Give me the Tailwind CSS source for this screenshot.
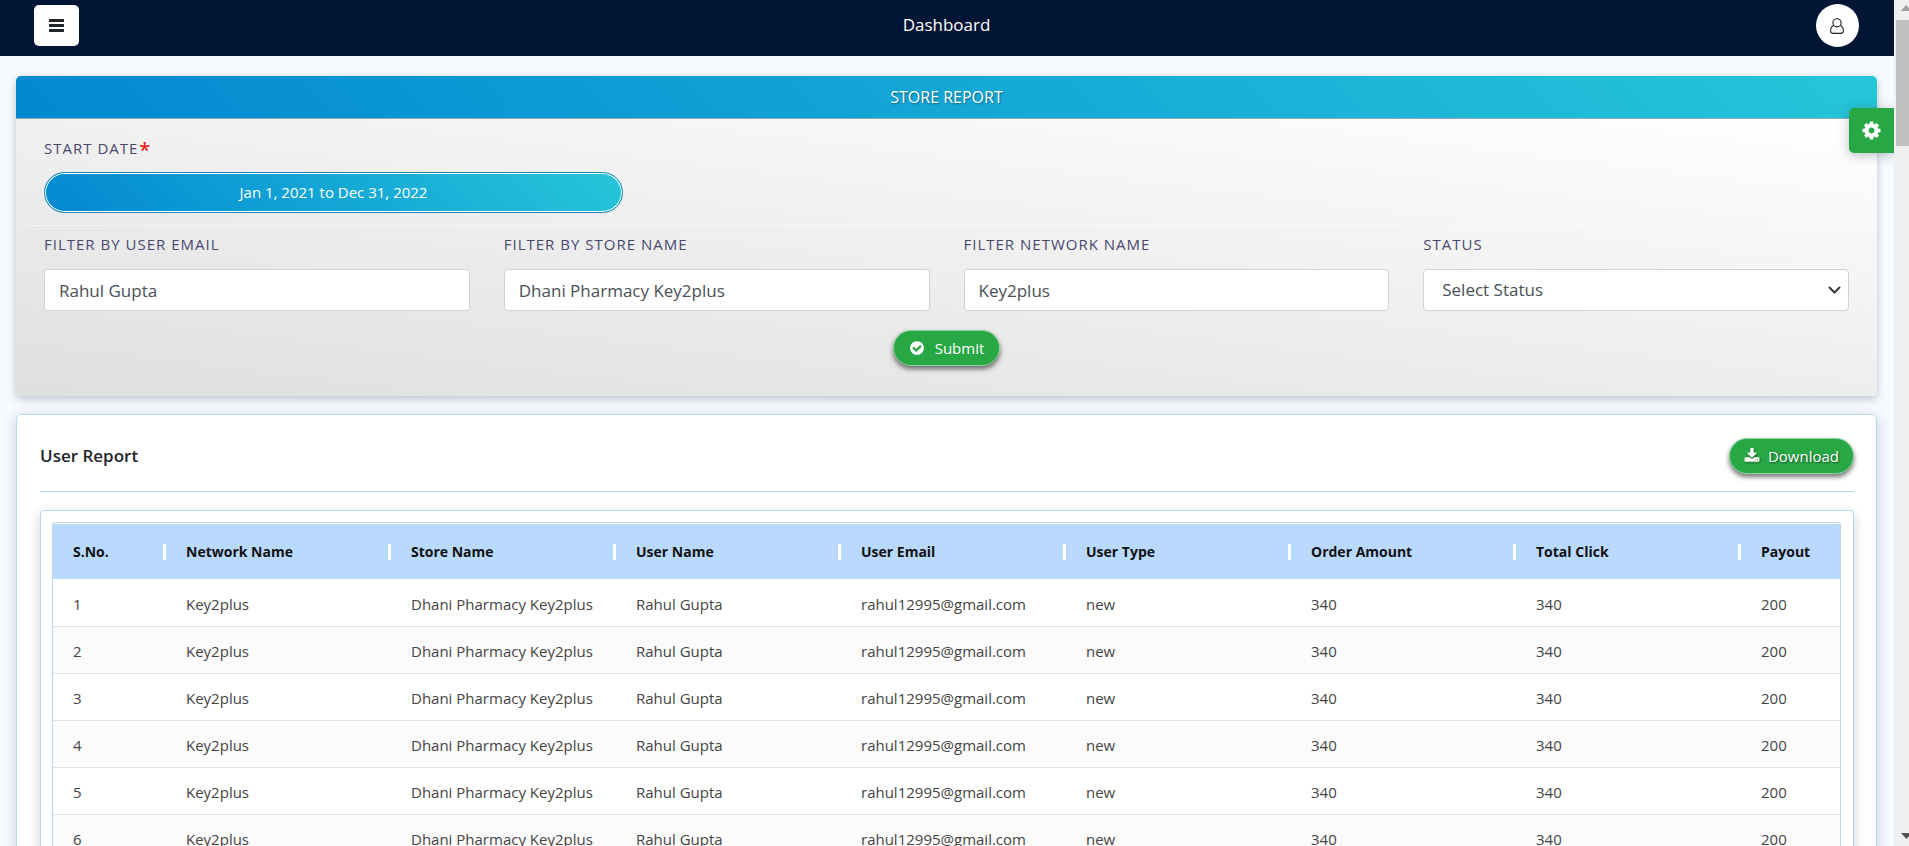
<!DOCTYPE html>
<html lang="en">
<head>
<meta charset="utf-8">
<meta name="viewport" content="width=device-width, initial-scale=1">
<title>Dashboard</title>
<script src="https://cdn.jsdelivr.net/npm/@tailwindcss/browser@4"></script>
</head>
<body class="flex h-screen overflow-hidden bg-[#f7faff] font-['Open_Sans','Noto_Sans',sans-serif] text-[#212529]">
<div class="relative min-w-0 flex-1 overflow-hidden">
  <header class="grid h-14 grid-cols-3 items-start bg-[#021534] pt-1 pr-[35px] pl-[34px]">
    <button type="button" aria-label="Toggle menu" class="mt-px flex h-[41px] w-[45px] items-center justify-center rounded-[5px] bg-white">
      <svg class="h-[13px] w-[15px]" viewBox="0 0 15 13" fill="#212529" aria-hidden="true"><rect width="15" height="3" rx=".5"/><rect y="5" width="15" height="3" rx=".5"/><rect y="10" width="15" height="3" rx=".5"/></svg>
    </button>
    <h1 class="pt-2 text-center text-[17px] leading-[26px] text-white">Dashboard</h1>
    <button type="button" aria-label="Account" class="flex size-[43px] items-center justify-center justify-self-end rounded-full bg-white">
      <svg class="mt-px h-4 w-[14px]" viewBox="0 0 14 16" fill="none" stroke="#222" stroke-width="1.1" aria-hidden="true"><circle cx="7" cy="4.800" r="4.100"/><path d="M3.800 7.500C1.600 8.300.6 10.600.6 12.800c0 1.700 1 2.600 2.600 2.600h7.600c1.600 0 2.600-.9 2.600-2.600 0-2.200-1-4.500-3.200-5.300"/></svg>
    </button>
  </header>

  <main class="flex flex-col gap-[18px] px-4 pt-5 pr-[17px]">
    <section class="rounded-[5px] shadow-[0_3px_8px_rgba(60,70,90,0.3)]">
      <h2 class="rounded-t-[5px] border-b border-[#8fa9b5] bg-[linear-gradient(45deg,#0288d1,#26c6da)] py-2 text-center text-base leading-[26px] text-white [text-shadow:1px_1px_2px_rgba(0,0,0,0.4)]">STORE REPORT</h2>
      <form class="rounded-b-[5px] bg-[linear-gradient(7deg,#dfdfdf,#ffffff)] px-7 pt-[18px] pb-[30px]" onsubmit="return false">
        <div class="grid grid-cols-3 gap-[34px]">
          <div>
            <label for="range" class="flex gap-px text-[15px] leading-[22px] font-medium tracking-[1px] text-[#48486f]">START DATE<span class="pt-1 text-[20px] leading-[18px] font-semibold text-[#e02020]">*</span></label>
            <button id="range" type="button" class="mt-[13px] block h-[41px] w-full rounded-full border border-[#1787b8] bg-[linear-gradient(45deg,#0288d1,#26c6da)] text-[15px] text-white shadow-[inset_0_0_0_1px_#fff]">Jan 1, 2021 to Dec 31, 2022</button>
          </div>
        </div>
        <hr class="-mx-[18px] mt-3 border-white/50">
        <div class="mt-[7px] grid grid-cols-4 gap-[34px]">
          <div>
            <label for="email" class="block text-[15px] leading-[22px] font-medium tracking-[1px] text-[#48486f]">FILTER BY USER EMAIL</label>
            <input id="email" type="text" value="Rahul Gupta" class="mt-[14px] block h-[42px] w-full rounded border border-[#ced4da] bg-white px-[14px] text-[17px] text-[#495057]">
          </div>
          <div>
            <label for="store" class="block text-[15px] leading-[22px] font-medium tracking-[1px] text-[#48486f]">FILTER BY STORE NAME</label>
            <input id="store" type="text" value="Dhani Pharmacy Key2plus" class="mt-[14px] block h-[42px] w-full rounded border border-[#ced4da] bg-white px-[14px] text-[17px] text-[#495057]">
          </div>
          <div>
            <label for="network" class="block text-[15px] leading-[22px] font-medium tracking-[1px] text-[#48486f]">FILTER NETWORK NAME</label>
            <input id="network" type="text" value="Key2plus" class="mt-[14px] block h-[42px] w-full rounded border border-[#ced4da] bg-white px-[14px] text-[17px] text-[#495057]">
          </div>
          <div>
            <label for="status" class="block text-[15px] leading-[22px] font-medium tracking-[1px] text-[#48486f]">STATUS</label>
            <div class="relative mt-[14px]">
              <select id="status" class="block h-[42px] w-full appearance-none rounded border border-[#ced4da] bg-white pr-8 pl-[18px] text-[17px] text-[#495057]"><option>Select Status</option><option>Active</option><option>Inactive</option></select>
              <svg class="pointer-events-none absolute top-[17px] right-2 h-2 w-[13px]" viewBox="0 0 13 8" fill="none" stroke="#343a40" stroke-width="2" stroke-linecap="round" stroke-linejoin="round" aria-hidden="true"><path d="M1.500 1.500l5 5 5-5"/></svg>
            </div>
          </div>
        </div>
        <div class="mt-[19px] flex justify-center">
          <button type="submit" class="flex h-9 items-center gap-2.5 rounded-full border border-[#8fd3a0] bg-[#28a745] px-[15px] text-[15px] text-white shadow-[0_3px_5px_rgba(0,0,0,0.55)]">
            <svg class="size-4" viewBox="0 0 1792 1792" fill="currentColor" aria-hidden="true"><path d="M1412 734q0-28-18-46l-91-90q-19-19-45-19t-45 19l-408 407-226-226q-19-19-45-19t-45 19l-91 90q-18 18-18 46 0 27 18 45l362 362q19 19 45 19 27 0 46-19l543-543q18-18 18-45zm252 162q0 209-103 385.500t-279.500 279.500-385.500 103-385.500-103-279.500-279.500-103-385.500 103-385.500 279.500-279.500 385.500-103 385.500 103 279.500 279.500 103 385.500z"/></svg>
            Submit
          </button>
        </div>
      </form>
    </section>

    <section class="rounded-[5px] border border-[#bcd6ea] bg-white px-[23px] pt-[23px] pr-[22px] pb-6 shadow-[0_4px_14px_rgba(60,90,140,0.28)]">
      <div class="flex items-center justify-between border-b border-[#bcd6ea] pb-[17px]">
        <h2 class="text-[17px] leading-6 font-semibold">User Report</h2>
        <button type="button" class="flex h-9 items-center gap-2 rounded-full border border-[#8fd3a0] bg-[#28a745] px-3.5 text-[15px] text-white shadow-[0_3px_5px_rgba(0,0,0,0.55)] [text-shadow:1px_1px_2px_rgba(0,0,0,0.5)]">
          <svg class="size-4 drop-shadow-[1px_1px_1px_rgba(0,0,0,0.4)]" viewBox="0 0 1792 1792" fill="currentColor" aria-hidden="true"><path d="M1344 1344q0-26-19-45t-45-19-45 19-19 45 19 45 45 19 45-19 19-45zm256 0q0-26-19-45t-45-19-45 19-19 45 19 45 45 19 45-19 19-45zm128-224v320q0 40-28 68t-68 28h-1472q-40 0-68-28t-28-68v-320q0-40 28-68t68-28h465l135 136q58 56 136 56t136-56l136-136h464q40 0 68 28t28 68zm-325-569q17 41-14 70l-448 448q-18 19-45 19t-45-19l-448-448q-31-29-14-70 17-39 59-39h256v-448q0-26 19-45t45-19h256q26 0 45 19t19 45v448h256q42 0 59 39z"/></svg>
          Download
        </button>
      </div>
      <div class="mt-[18px] rounded border border-[#bcd6ea] p-[11px] pr-3 shadow-[0_4px_12px_rgba(60,70,90,0.25)]">
        <div class="rounded-t-[3px] border border-[#bcd6ea] pt-px">
          <table class="w-full table-fixed text-left text-[14px]">
            <colgroup><col class="w-[113px]"><col><col><col><col><col><col><col><col class="w-[99px]"></colgroup>
            <thead class="bg-[#b9d9ff] text-[#111]">
              <tr class="h-[55px]">
                <th class="p-0"><div class="flex h-4 items-center border-r-3 border-white pl-5 font-bold">S.No.</div></th>
                <th class="p-0"><div class="flex h-4 items-center border-r-3 border-white pl-5 font-bold">Network Name</div></th>
                <th class="p-0"><div class="flex h-4 items-center border-r-3 border-white pl-5 font-bold">Store Name</div></th>
                <th class="p-0"><div class="flex h-4 items-center border-r-3 border-white pl-5 font-bold">User Name</div></th>
                <th class="p-0"><div class="flex h-4 items-center border-r-3 border-white pl-5 font-bold">User Email</div></th>
                <th class="p-0"><div class="flex h-4 items-center border-r-3 border-white pl-5 font-bold">User Type</div></th>
                <th class="p-0"><div class="flex h-4 items-center border-r-3 border-white pl-5 font-bold">Order Amount</div></th>
                <th class="p-0"><div class="flex h-4 items-center border-r-3 border-white pl-5 font-bold">Total Click</div></th>
                <th class="p-0"><div class="flex h-4 items-center pl-5 font-bold">Payout</div></th>
              </tr>
            </thead>
            <tbody id="rows" class="text-[15px] text-[#444]"></tbody>
          </table>
        </div>
      </div>
    </section>
  </main>

  <button type="button" aria-label="Settings" class="absolute top-[108px] right-0 flex size-[45px] items-center justify-center rounded-l-[5px] bg-[#28a745] text-white shadow-[0_2px_12px_rgba(60,70,90,0.35)]">
    <svg class="size-[21px]" viewBox="0 0 1792 1792" fill="currentColor" aria-hidden="true"><path d="M1152 896q0-106-75-181t-181-75-181 75-75 181 75 181 181 75 181-75 75-181zm512-109v222q0 12-8 23t-20 13l-185 28q-19 54-39 91 35 50 107 138 10 12 10 25t-9 23q-27 37-99 108t-94 71q-12 0-26-9l-138-108q-44 23-91 38-16 136-29 186-7 28-36 28h-222q-14 0-24.500-8.500t-11.500-21.500l-28-184q-49-16-90-37l-141 107q-10 9-25 9-14 0-25-11-126-114-165-168-7-10-7-23 0-12 8-23 15-21 51-66.500t54-70.500q-27-50-41-99l-183-27q-13-2-21-12.500t-8-23.500v-222q0-12 8-23t19-13l186-28q14-46 39-92-40-57-107-138-10-12-10-24 0-10 9-23 26-36 98.500-107.500t94.500-71.500q13 0 26 10l138 107q44-23 91-38 16-136 29-186 7-28 36-28h222q14 0 24.500 8.500t11.500 21.500l28 184q49 16 90 37l142-107q9-9 24-9 13 0 25 10 129 119 165 170 7 8 7 22 0 12-8 23-15 21-51 66.500t-54 70.500q26 50 41 98l183 28q13 2 21 12.500t8 23.500z"/></svg>
  </button>
</div>

<!-- Page scrollbar -->
<div class="flex w-[15px] shrink-0 flex-col items-end overflow-hidden bg-[#f0f0f1]" aria-hidden="true">
  <svg class="mt-[5px] h-[6px] w-2" viewBox="0 0 8 6" fill="#a0a0a0"><path d="M0 6l5-6 3 3v3z"/></svg>
  <div class="mt-[9px] h-[126px] w-[13px] bg-[#c1c1c1]"></div>
  <svg class="mt-auto mb-[7px] h-[6px] w-2" viewBox="0 0 8 6" fill="#505050"><path d="M0 0h8v3L5.500 6z"/></svg>
</div>

<script>
const body = document.getElementById('rows');
for (let i = 1; i <= 6; i++) {
  const tr = document.createElement('tr');
  tr.className = 'h-[47px] border-b border-[#dee2e6] even:bg-[#fbfbfc]';
  [i, 'Key2plus', 'Dhani Pharmacy Key2plus', 'Rahul Gupta', 'rahul12995@gmail.com', 'new', 340, 340, 200].forEach(v => {
    const td = document.createElement('td');
    td.className = 'truncate pt-[3px] pl-5';
    td.textContent = v;
    tr.append(td);
  });
  body.append(tr);
}
</script>
</body>
</html>
